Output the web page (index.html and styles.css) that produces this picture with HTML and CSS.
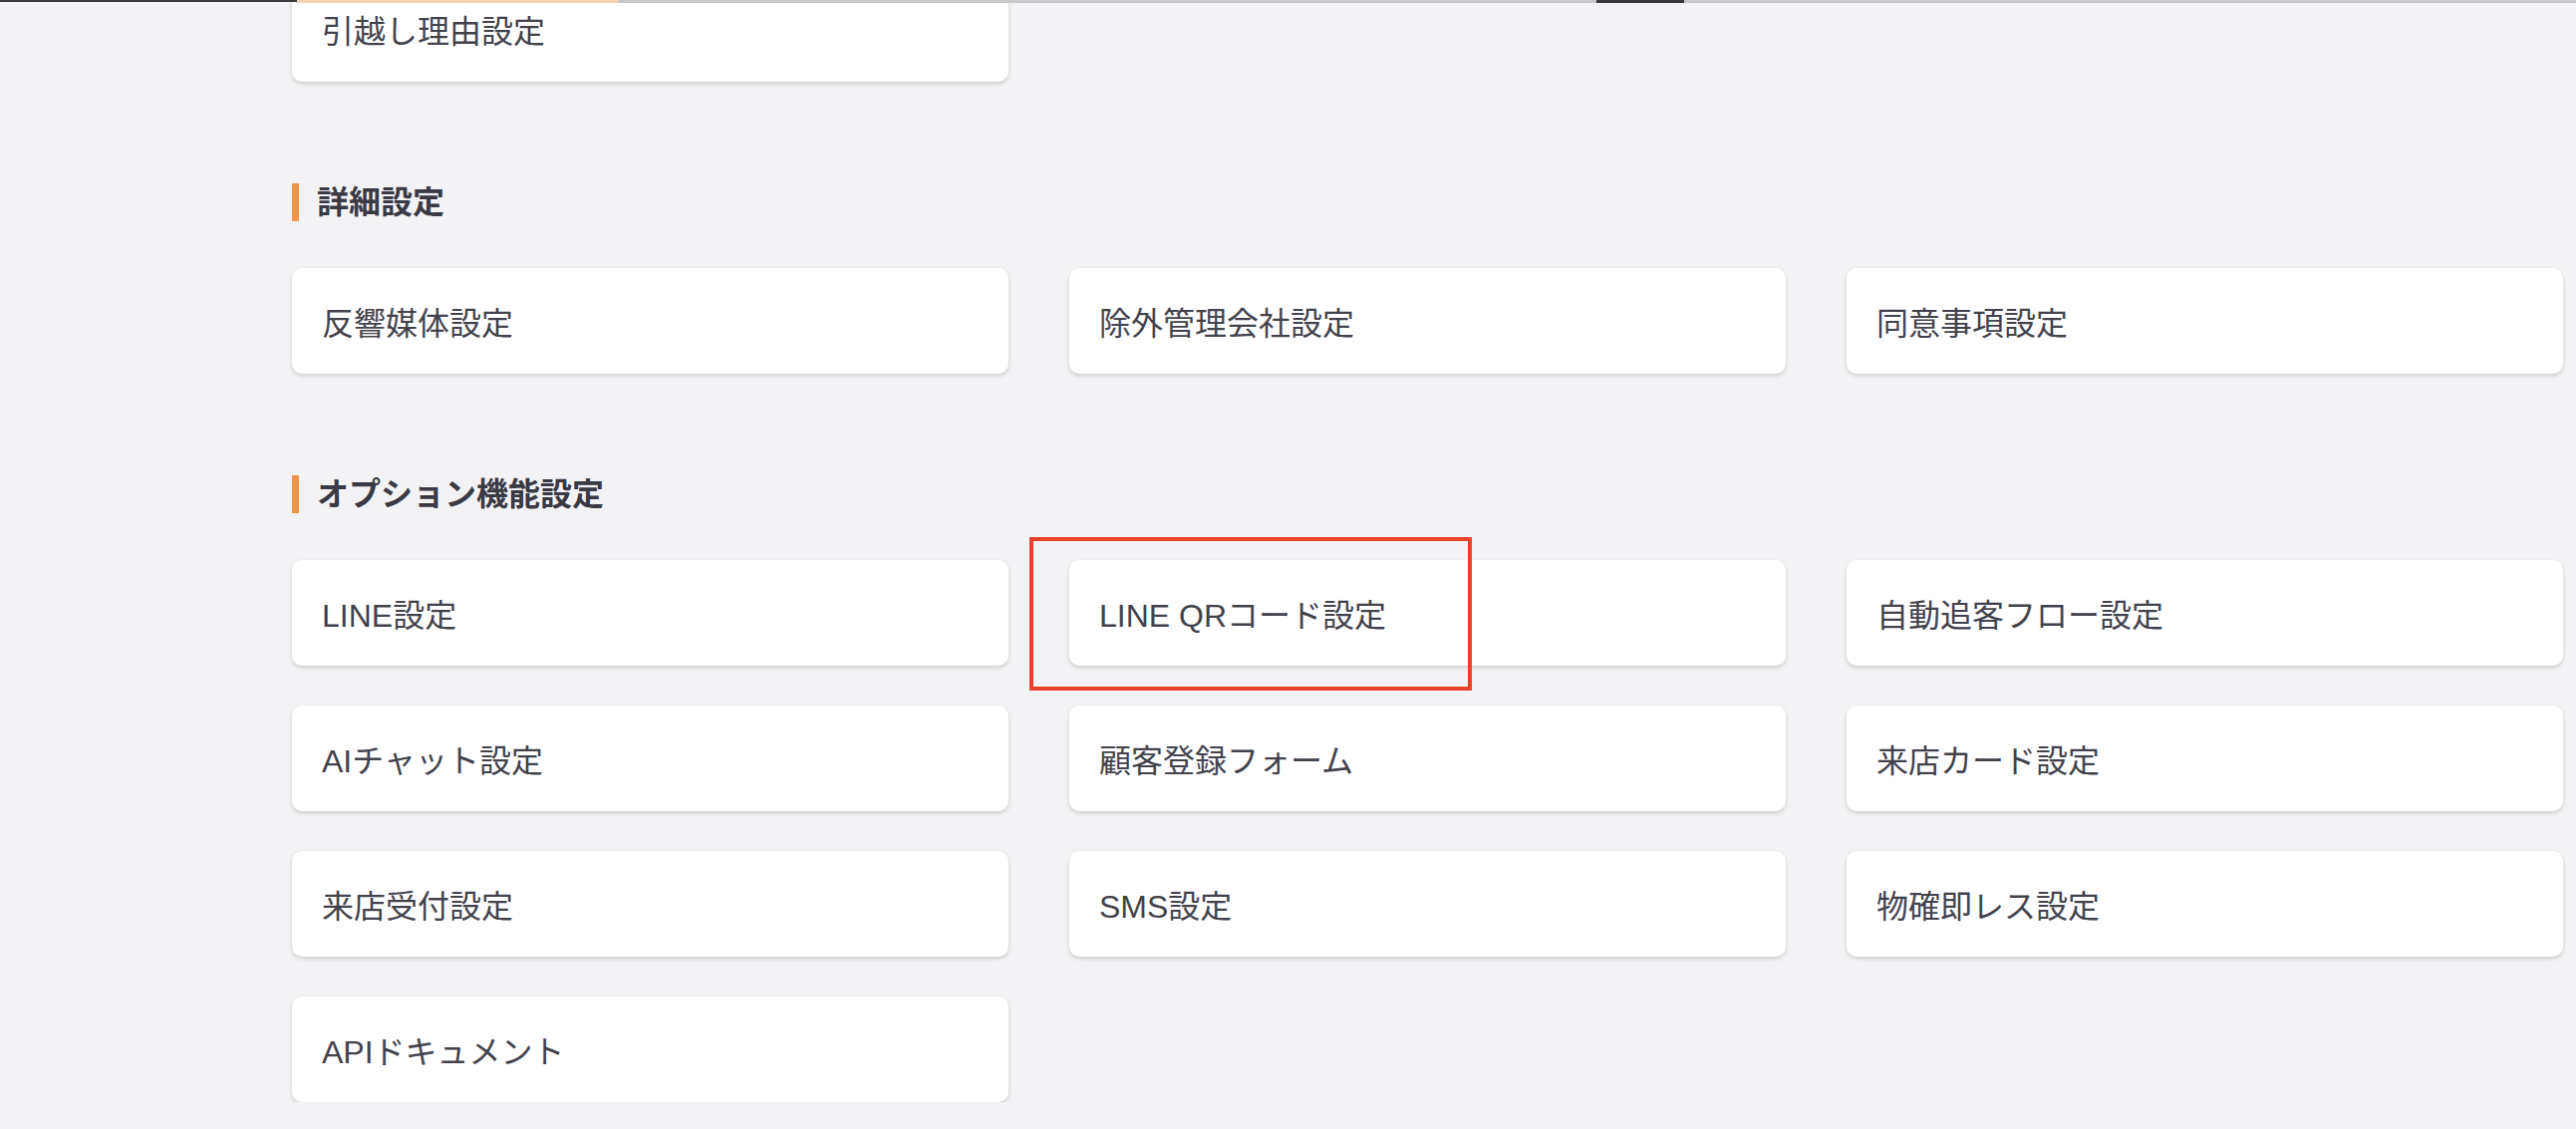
FILE: index.html
```html
<!DOCTYPE html>
<html lang="ja">
<head>
<meta charset="utf-8">
<title>設定</title>
<link rel="stylesheet" href="styles.css">
</head>
<body>
<div class="topstrip">
  <span class="seg seg-dark"></span>
  <span class="seg seg-peach"></span>
  <span class="seg seg-grey seg-grey-a"></span>
  <span class="seg seg-mark"></span>
  <span class="seg seg-grey seg-grey-b"></span>
</div>
<main class="page">
  <section class="section section-first">
    <div class="grid">
      <a class="card">引越し理由設定</a>
    </div>
  </section>

  <section class="section">
    <h2 class="heading">詳細設定</h2>
    <div class="grid">
      <a class="card">反響媒体設定</a>
      <a class="card">除外管理会社設定</a>
      <a class="card">同意事項設定</a>
    </div>
  </section>

  <section class="section">
    <h2 class="heading">オプション機能設定</h2>
    <div class="grid">
      <a class="card">LINE設定</a>
      <a class="card card-marked">LINE QRコード設定<span class="highlight"></span></a>
      <a class="card">自動追客フロー設定</a>
      <a class="card">AIチャット設定</a>
      <a class="card">顧客登録フォーム</a>
      <a class="card">来店カード設定</a>
      <a class="card">来店受付設定</a>
      <a class="card">SMS設定</a>
      <a class="card">物確即レス設定</a>
      <a class="card">APIドキュメント</a>
    </div>
  </section>
</main>
</body>
</html>
```

FILE: styles.css
```css
* {
  box-sizing: border-box;
}

html, body {
  margin: 0;
  padding: 0;
  background: #f3f3f5;
  overflow: hidden;
}

body {
  font-family: "Liberation Sans", "Noto Sans CJK JP", sans-serif;
  color: #42424c;
}

.topstrip {
  position: fixed;
  top: 0;
  left: 0;
  right: 0;
  height: 3px;
  display: flex;
  align-items: flex-start;
  z-index: 10;
}

.seg {
  display: block;
}

.seg-dark {
  width: 298px;
  height: 2px;
  background: #3a3a3e;
}

.seg-peach {
  width: 322px;
  height: 3px;
  background: #f4d2b6;
}

.seg-grey {
  height: 3px;
  background: #c8c8ca;
}

.seg-grey-a {
  width: 982px;
}

.seg-mark {
  width: 88px;
  height: 3px;
  background: #35353b;
}

.seg-grey-b {
  flex: 1;
}

.page {
  padding-left: 293px;
  margin-top: -24px;
}

.section {
  margin-top: 102px;
}

.section-first {
  margin-top: 0;
}

.heading {
  margin: 0 0 47px 0;
  height: 38px;
  line-height: 38px;
  border-left: 7px solid #f0944a;
  padding-left: 18px;
  font-size: 32px;
  font-weight: 700;
  color: #3a3a44;
}

.grid {
  display: grid;
  grid-template-columns: repeat(3, 719px);
  column-gap: 61px;
  row-gap: 40px;
}

.card {
  position: relative;
  display: flex;
  align-items: center;
  height: 106px;
  padding-left: 30px;
  background: #ffffff;
  border-radius: 10px;
  box-shadow: 0 2px 4px rgba(0, 0, 0, 0.16);
  font-size: 32px;
  color: #42424c;
  text-decoration: none;
  white-space: nowrap;
}

.highlight {
  position: absolute;
  left: -40px;
  top: -23px;
  width: 444px;
  height: 154px;
  border: 4px solid #e8432a;
  pointer-events: none;
}
```
